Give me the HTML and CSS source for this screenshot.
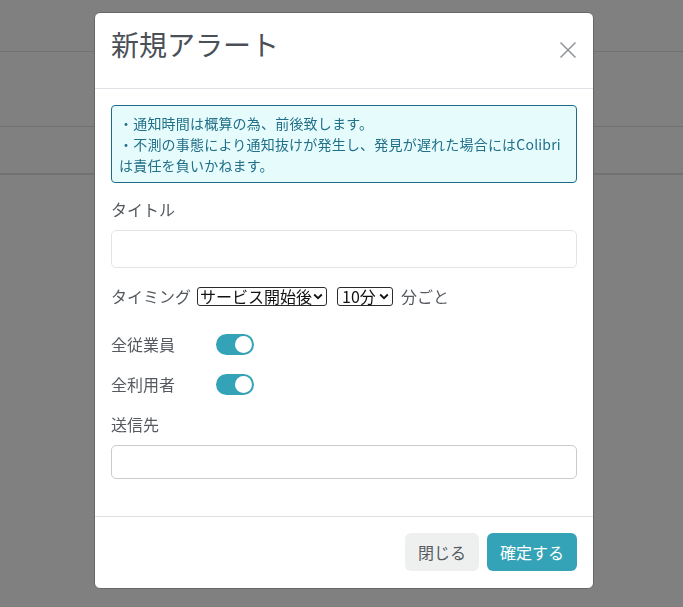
FILE: index.html
```html
<!DOCTYPE html>
<html lang="ja">
<head>
<meta charset="utf-8">
<title>新規アラート</title>
<link rel="stylesheet" href="styles.css">
</head>
<body>
<div class="page">
  <div class="bg-row r1"></div>
  <div class="bg-row r2"></div>
  <div class="bg-row r3"></div>
</div>
<div class="overlay">
  <div class="modal">
    <div class="modal-header">
      <h5 class="modal-title">新規アラート</h5>
      <button class="close" type="button" aria-label="Close">
        <svg width="18" height="18" viewBox="0 0 18 18"><path d="M1.5 1.5 L16.5 16.5 M16.5 1.5 L1.5 16.5" stroke="#909397" stroke-width="1.5" fill="none"/></svg>
      </button>
    </div>
    <div class="modal-body">
      <div class="alert">・通知時間は概算の為、前後致します。<br>・不測の事態により通知抜けが発生し、発見が遅れた場合にはColibri<br>は責任を負いかねます。</div>
      <div class="group">
        <label class="label">タイトル</label>
        <input class="input input-light" type="text">
      </div>
      <div class="timing">
        <span class="timing-label">タイミング</span>
        <span class="sel sel-wide">
          <select><option>サービス開始後</option></select>
          <svg class="chev" width="10" height="7" viewBox="0 0 10 7"><path d="M1.2 1.5 L5 5.2 L8.8 1.5" stroke="#111" stroke-width="1.8" fill="none"/></svg>
        </span>
        <span class="sel sel-narrow">
          <select><option>10分</option></select>
          <svg class="chev" width="10" height="7" viewBox="0 0 10 7"><path d="M1.2 1.5 L5 5.2 L8.8 1.5" stroke="#111" stroke-width="1.8" fill="none"/></svg>
        </span>
        <span class="timing-suffix">分ごと</span>
      </div>
      <div class="switch-row">
        <span class="switch-label">全従業員</span>
        <span class="switch"><span class="knob"></span></span>
      </div>
      <div class="switch-row">
        <span class="switch-label">全利用者</span>
        <span class="switch"><span class="knob"></span></span>
      </div>
      <div class="group group-last">
        <label class="label">送信先</label>
        <input class="input input-dark" type="text">
      </div>
    </div>
    <div class="modal-footer">
      <button class="btn btn-secondary" type="button">閉じる</button>
      <button class="btn btn-primary" type="button">確定する</button>
    </div>
  </div>
</div>
</body>
</html>
```

FILE: styles.css
```css
* { box-sizing: border-box; }

html, body {
  margin: 0;
  padding: 0;
  height: 100%;
}

body {
  background: #808080;
  font-family: "Noto Sans CJK JP", "Liberation Sans", sans-serif;
  color: #495057;
  overflow: hidden;
}

.page {
  display: flex;
  flex-direction: column;
}

.bg-row { border-bottom: 1px solid #6f7173; }
.r1 { height: 52px; }
.r2 { height: 75px; }
.r3 { height: 48px; border-bottom-width: 2px; }

.overlay {
  position: fixed;
  inset: 0;
}

.modal {
  position: absolute;
  left: 94px;
  top: 12px;
  width: 500px;
  background: #fff;
  border: 1px solid #666;
  border-radius: 6px;
  display: flex;
  flex-direction: column;
}

.modal-header {
  display: flex;
  align-items: flex-start;
  justify-content: space-between;
  height: 76px;
  padding: 13px 16px 0 16px;
  border-bottom: 1px solid #dee2e6;
}

.modal-title {
  margin: 0;
  font-size: 28px;
  line-height: 36px;
  font-weight: 400;
  color: #4a5057;
}

.close {
  margin: 15px 0 0 0;
  padding: 0;
  border: 0;
  background: none;
  width: 18px;
  height: 18px;
  display: flex;
}

.modal-body {
  padding: 16px 16px 37px 16px;
  display: flex;
  flex-direction: column;
}

.alert {
  border: 1px solid #1d6d8a;
  background: #e6fcfc;
  color: #226f8a;
  border-radius: 4px;
  font-size: 14px;
  line-height: 21px;
  letter-spacing: 0.2px;
  padding: 7px 7px 6px 7px;
  margin-bottom: 14px;
}

.group {
  display: flex;
  flex-direction: column;
}

.label {
  font-size: 16px;
  line-height: 24px;
  margin-bottom: 9px;
  color: #555a60;
}

.input {
  width: 100%;
  border-radius: 5px;
  background: #fff;
  font: inherit;
  padding: 0 12px;
  outline: none;
}

.input-light {
  height: 38px;
  border: 1px solid #e2e5e8;
}

.input-dark {
  height: 34px;
  border: 1px solid #c8cacc;
}

.timing {
  display: flex;
  align-items: center;
  margin-top: 16px;
  height: 24px;
  font-size: 16px;
  color: #555a60;
}

.timing-label { margin-right: 6px; }

.sel {
  position: relative;
  display: inline-flex;
}

.sel select {
  appearance: none;
  -webkit-appearance: none;
  font-family: inherit;
  font-size: 16px;
  color: #111;
  background: #fff;
  border: 1px solid #2b2b2b;
  border-radius: 3px;
  height: 19px;
  line-height: 17px;
  padding: 0 0 0 2px;
  margin: 0;
}

.sel-wide select { width: 130px; }
.sel-narrow { margin-left: 10px; }
.sel-narrow select { width: 56px; padding-left: 4px; }

.chev {
  position: absolute;
  right: 4px;
  top: 6px;
  pointer-events: none;
}

.timing-suffix { margin-left: 8px; }

.switch-row {
  display: flex;
  align-items: center;
  height: 24px;
  font-size: 16px;
  color: #555a60;
}

.timing + .switch-row { margin-top: 24px; }
.switch-row + .switch-row { margin-top: 16px; }

.switch-label { width: 105px; }

.switch {
  width: 38px;
  height: 21px;
  border-radius: 11px;
  background: #35a3b7;
  display: flex;
  align-items: center;
  justify-content: flex-end;
  padding-right: 2px;
}

.knob {
  width: 17px;
  height: 17px;
  border-radius: 50%;
  background: #fff;
}

.group-last { margin-top: 16px; }

.modal-footer {
  display: flex;
  justify-content: flex-end;
  gap: 8px;
  padding: 16px 16px 17px 16px;
  border-top: 1px solid #dee2e6;
}

.btn {
  height: 38px;
  padding: 0 13px;
  border: 0;
  border-radius: 6px;
  font-family: inherit;
  font-size: 16px;
  line-height: 38px;
}

.btn-secondary {
  background: #eef0f0;
  color: #555a60;
}

.btn-primary {
  background: #35a3b7;
  color: #fff;
}
```
